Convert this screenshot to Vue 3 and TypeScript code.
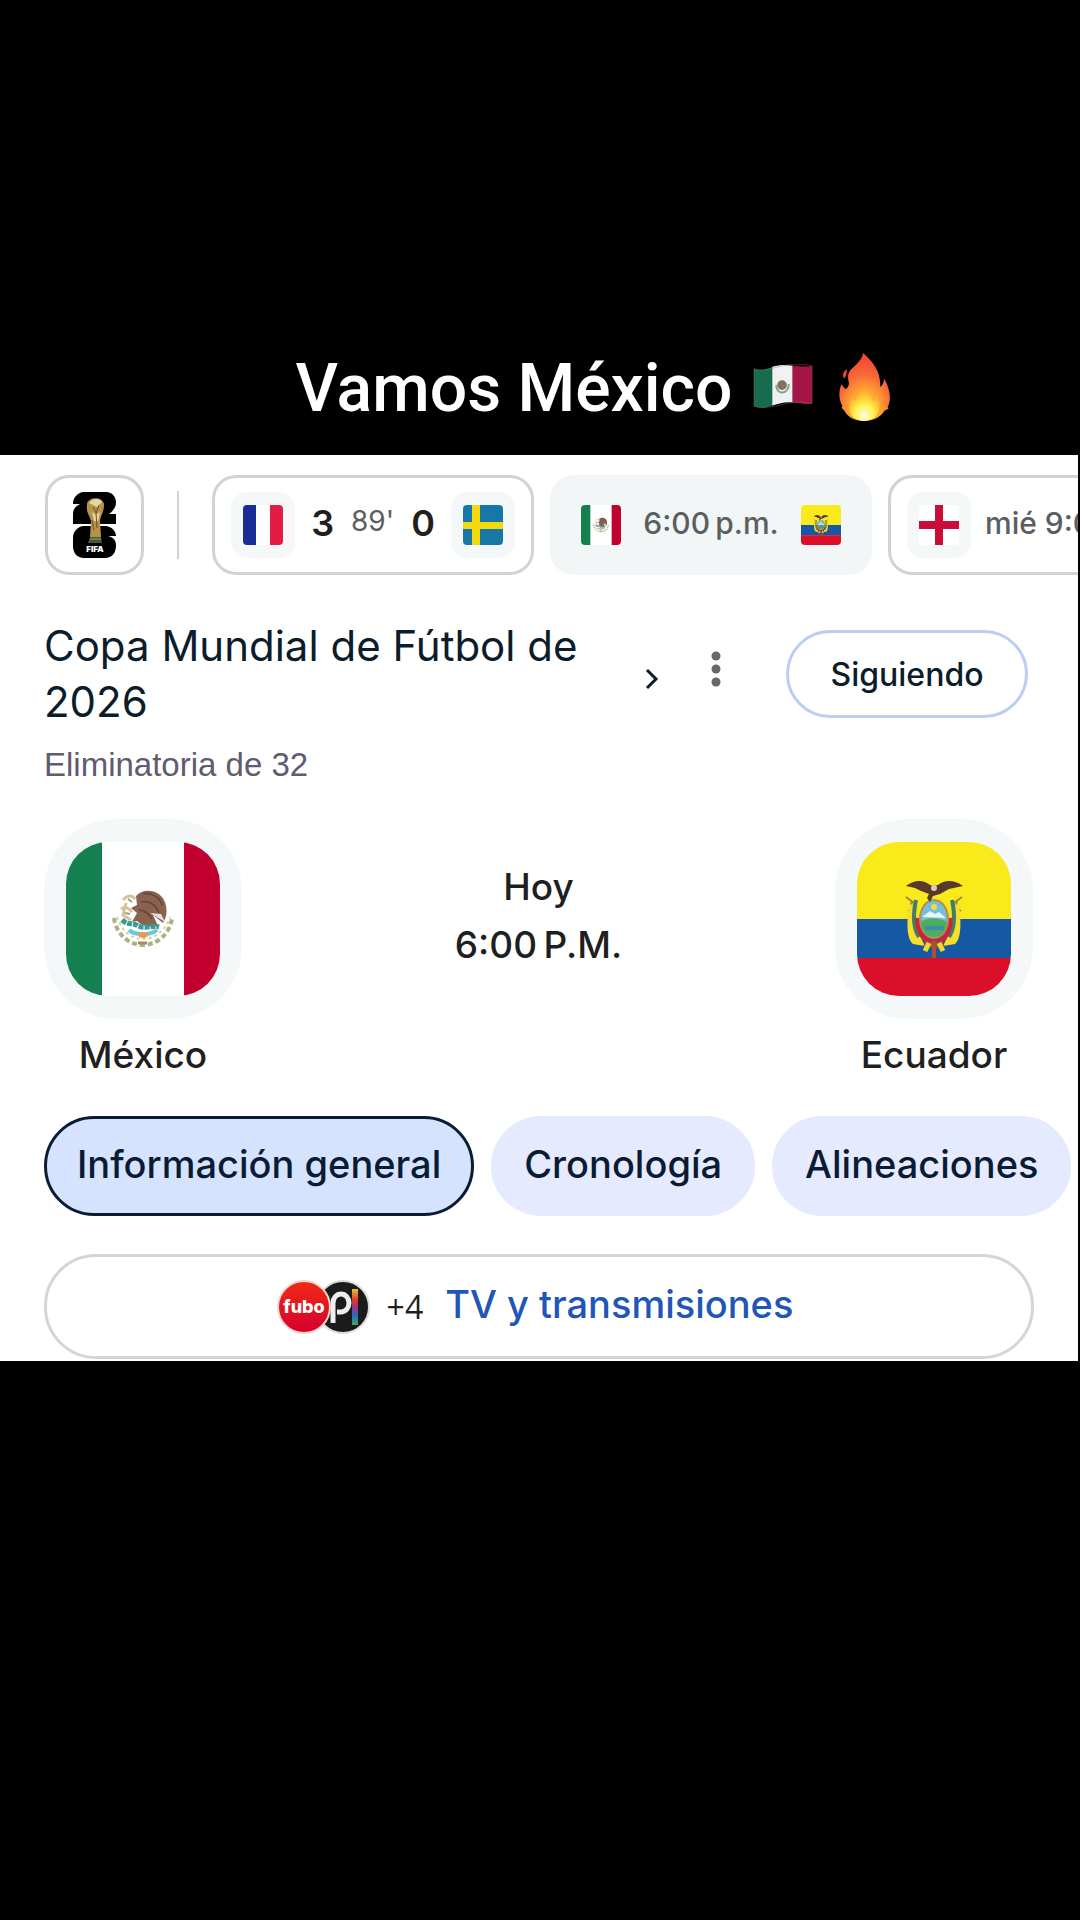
<script setup lang="ts">
import { ref } from 'vue'

interface Team {
  name: string
  flag: string
}

const home: Team = { name: 'México', flag: '#flag-mx' }
const away: Team = { name: 'Ecuador', flag: '#flag-ec' }

const tabs: string[] = ['Información general', 'Cronología', 'Alineaciones']
const activeTab = ref<string>(tabs[0])
</script>

<template>
  <main class="post">
    <svg class="defs" width="0" height="0" aria-hidden="true">
      <symbol id="flag-fr" viewBox="0 0 40 40">
        <rect width="40" height="40" fill="#fff" />
        <rect width="13" height="40" fill="#1b2c96" />
        <rect x="27" width="13" height="40" fill="#e31c41" />
      </symbol>
      <symbol id="flag-se" viewBox="0 0 40 40">
        <rect width="40" height="40" fill="#1778a8" />
        <path d="M9 0h8v40H9zM0 17h40v7H0z" fill="#f5d90f" />
      </symbol>
      <symbol id="flag-en" viewBox="0 0 40 40">
        <rect width="40" height="40" fill="#fff" />
        <path d="M16 0h8v40h-8zM0 16h40v8H0z" fill="#cb0c38" />
      </symbol>
      <symbol id="flag-mx" viewBox="0 0 154 154">
        <rect width="154" height="154" fill="#fff" />
        <rect width="36" height="154" fill="#15804f" />
        <rect x="118" width="36" height="154" fill="#c2002f" />
        <path d="M48 76c2 16 15 27 29 27s27-11 29-27" fill="none" stroke="#a9b287" stroke-width="4" stroke-dasharray="5 3" />
        <path d="M51 75c4 13 14 22 26 22s23-9 27-22" fill="none" stroke="#d8cf9c" stroke-width="2" stroke-dasharray="3 3" />
        <path d="M70 54c7-8 22-7 28 4 4 8 3 17-1 23l-10-8 5 11c-8 2-16 0-21-5l-5 1 5-9-6-5 6-3z" fill="#8a6350" />
        <path d="M77 52c8-2 17 3 19 11M75 60c8-2 15 3 18 11M73 68c6 0 10 4 13 9" fill="none" stroke="#6b493a" stroke-width="2" />
        <path d="M84 71l15 9-4-8z" fill="#e5dfe6" />
        <path d="M57 58c4-5 9-5 12-1M55 67c4-3 8-1 11 3M60 61l-3 12 8 5" fill="none" stroke="#d6c39b" stroke-width="3" />
        <path d="M62 57l4 3M59 71l5 1" stroke="#8fa580" stroke-width="2" />
        <path d="M56 78c7 6 11 2 16 6 8 3 14-1 21 1" fill="none" stroke="#3a9a94" stroke-width="5" stroke-dasharray="5 1" />
        <path d="M63 88c5 5 21 6 28 0" fill="none" stroke="#6cc7d6" stroke-width="4" />
        <ellipse cx="77" cy="93" rx="5" ry="3" fill="#e79a55" />
        <path d="M72 101h9" stroke="#a98b5d" stroke-width="3" />
      </symbol>
      <symbol id="flag-ec" viewBox="0 0 154 154">
        <rect width="154" height="77" fill="#fae91b" />
        <rect y="77" width="154" height="39" fill="#1558a3" />
        <rect y="116" width="154" height="38" fill="#dc0f2b" />
        <path d="M54 58l6 44M100 58l-6 44M49 55l8 6M105 55l-8 6M51 69l6-4M104 69l-6-4" stroke="#a18a43" stroke-width="2" />
        <path d="M52 62c-2 16-3 34 4 40l12 2-5-10-1-30zM102 62c2 16 3 34-4 40l-12 2 5-10 1-30z" fill="#f4df2b" />
        <path d="M59 58c-3 14-3 28 3 37M95 58c3 14 3 28-3 37" fill="none" stroke="#3f7f68" stroke-width="4" />
        <path d="M61 76c-1 13 6 24 16 24s17-11 16-24" fill="none" stroke="#ce233c" stroke-width="5" />
        <ellipse cx="77" cy="77" rx="15" ry="20" fill="#b88e48" />
        <ellipse cx="77" cy="77" rx="13" ry="18" fill="#73bfdc" />
        <path d="M64 80c7-5 18-5 26 0 0 9-6 15-13 15s-13-6-13-15z" fill="#4eae60" />
        <path d="M65 75l8-6 5 3 4-2 7 6z" fill="#e9f5fb" />
        <path d="M67 84h20v4H68z" fill="#398eaa" />
        <circle cx="77" cy="65" r="3" fill="#f3dc3d" />
        <path d="M49 44c8-6 17-7 24-1l4 1 4-1c7-6 17-5 25 1l-14 3-9 5-7 2-3 6-3-4 2-4-8-3-6-3z" fill="#573a27" />
        <circle cx="77" cy="46" r="3" fill="#d8cfbf" />
        <path d="M77 99v17M68 101l19 4M86 101l-19 4" stroke="#a45233" stroke-width="4" />
        <path d="M72 101l-4 8M82 101l4 8" stroke="#f0d92a" stroke-width="5" />
      </symbol>
    </svg>

    <h1 class="caption">
      <span>Vamos México</span>
      <svg class="emoji-flag" viewBox="0 0 62 46" role="img" aria-label="Bandera de México">
        <path d="M1 4c7 3 13 0 20-2v40c-7 2-13 4-20 1z" fill="#166c4c" />
        <path d="M20 2c8-2 13-2 21-1v38c-8-1-13 1-21 3z" fill="#f1f1f2" />
        <path d="M41 1c7 0 13 2 20 0v39c-7 2-13-1-20-1z" fill="#a51446" />
        <path d="M1 4c17 6 26-9 60-3v39c-25-6-37 8-60 3z" fill="none" stroke="#777" stroke-opacity=".4" />
        <circle cx="30" cy="21" r="5" fill="#86715f" />
        <path d="M24 21c0 11 13 10 13-1" fill="none" stroke="#7fa689" stroke-width="2" />
      </svg>
      <svg class="emoji-fire" viewBox="0 0 54 72" role="img" aria-label="Fuego">
        <defs>
          <radialGradient id="fire-outer" cx=".5" cy=".85" r=".85">
            <stop offset="0" stop-color="#ffe23c" />
            <stop offset=".35" stop-color="#ffa62e" />
            <stop offset=".65" stop-color="#f8663b" />
            <stop offset="1" stop-color="#f4402d" />
          </radialGradient>
          <radialGradient id="fire-inner" cx=".5" cy=".85" r=".7">
            <stop offset="0" stop-color="#fffce0" />
            <stop offset=".5" stop-color="#ffee45" />
            <stop offset="1" stop-color="#ffb331" stop-opacity=".4" />
          </radialGradient>
        </defs>
        <path d="M25 0c11 10 19 20 18 36 3-2 4-5 4-9 7 11 8 23 4 30l1 2-4 2c-5 8-13 11-22 11S9 69 5 61l-3-3 1-2C-2 47 0 38 2 33l4 5c2 0 4-3 4-6C7 20 12 18 17 13c5-5 7-8 8-13z" fill="url(#fire-outer)" />
        <path d="M8 17c-1 5 0 6-3 10-3-4 0-8 3-10z" fill="#f4482d" />
        <path d="M26 34c2 7 7 11 10 18 3-3 3-5 3-8 7 12 3 27-12 28-14 0-21-12-14-25l4 5c2-8 9-11 9-18z" fill="url(#fire-inner)" />
      </svg>
    </h1>

    <section class="panel">
      <nav class="matches" aria-label="Partidos">
        <a class="card cup" href="#" aria-label="Copa Mundial">
          <svg width="44" height="66" viewBox="0 0 44 66">
            <path d="M10 0h24c6 1 9 5 9 11 0 4-3 8-7 11h7v10H0V22c0-5 3-8 7-10H0C0 6 4 1 10 0z" fill="#000" />
            <path d="M10 34h23c6 1 10 5 10 10h-8c5 1 8 4 8 9 0 8-4 13-11 13H11C4 66 0 61 0 54v-8c0-6 4-11 10-12z" fill="#000" />
            <path d="M14 12c1-7 15-8 17 0 0 9-3 10-4 17l1 16H17l1-16c-2-7-5-8-4-17z" fill="#b6924c" />
            <path d="M16 11c4-5 10-5 13-1l-5 5zM19 20l4 3 4-3-2 9h-4z" fill="#e7d7a1" />
            <path d="M20 15l3 5M26 13l-3 8 1 15M19 28l2 10" stroke="#6e4f20" stroke-width="1" fill="none" />
            <path d="M17 45h11l1 6H15z" fill="#47553a" />
            <path d="M17 47h11" stroke="#a9a36b" />
            <text x="22" y="60" text-anchor="middle" class="cup-text">FIFA</text>
          </svg>
        </a>
        <span class="divider"></span>
        <a class="card live" href="#">
          <span class="tile"><svg class="flag"><use href="#flag-fr" /></svg></span>
          <span class="result"><b>3</b><span>89'</span><b>0</b></span>
          <span class="tile"><svg class="flag"><use href="#flag-se" /></svg></span>
        </a>
        <a class="card current" href="#">
          <span class="tile"><svg class="flag"><use href="#flag-mx" /></svg></span>
          <span class="time">6:00&#8201;p.m.</span>
          <span class="tile"><svg class="flag"><use href="#flag-ec" /></svg></span>
        </a>
        <a class="card next" href="#">
          <span class="tile"><svg class="flag"><use href="#flag-en" /></svg></span>
          <span class="time">mié 9:00</span>
        </a>
      </nav>

      <header class="heading">
        <a class="league" href="#">
          <h2>Copa Mundial de Fútbol de 2026</h2>
          <svg class="chevron" width="14" height="22" viewBox="0 0 14 22" aria-hidden="true">
            <path d="M2 2l9 9-9 9" fill="none" stroke="#0b1d2b" stroke-width="3" />
          </svg>
        </a>
        <button class="more" type="button" aria-label="Más opciones">
          <svg width="10" height="36" viewBox="0 0 10 36">
            <circle cx="5" cy="5" r="4.5" />
            <circle cx="5" cy="18" r="4.5" />
            <circle cx="5" cy="31" r="4.5" />
          </svg>
        </button>
        <button class="follow" type="button">Siguiendo</button>
      </header>
      <p class="stage">Eliminatoria de 32</p>

      <div class="versus">
        <div class="team">
          <span class="crest"><svg><use :href="home.flag" /></svg></span>
          <span>{{ home.name }}</span>
        </div>
        <p class="kickoff">Hoy<br />6:00&#8201;P.M.</p>
        <div class="team">
          <span class="crest"><svg><use :href="away.flag" /></svg></span>
          <span>{{ away.name }}</span>
        </div>
      </div>

      <div class="tabs">
        <button
          v-for="tab in tabs"
          :key="tab"
          type="button"
          class="tab"
          :class="{ active: tab === activeTab }"
          @click="activeTab = tab"
        >
          {{ tab }}
        </button>
      </div>

      <a class="streams" href="#">
        <svg class="providers" width="94" height="54" viewBox="0 0 94 54" aria-hidden="true">
          <defs>
            <linearGradient id="fubo" x1="0" y1="0" x2="0" y2="1">
              <stop offset="0" stop-color="#ef2b14" />
              <stop offset="1" stop-color="#d6002f" />
            </linearGradient>
            <linearGradient id="rainbow" x1="0" y1="0" x2="0" y2="1">
              <stop offset="0" stop-color="#e9bd38" />
              <stop offset=".3" stop-color="#dc3b28" />
              <stop offset=".5" stop-color="#a52e83" />
              <stop offset=".75" stop-color="#246fc4" />
              <stop offset="1" stop-color="#3bb04a" />
            </linearGradient>
          </defs>
          <circle cx="66" cy="27" r="26" fill="#1b1b1b" stroke="#dedbd8" stroke-width="2" />
          <path d="M56 43V23a8 9 0 1 1 8 9h-4" fill="none" stroke="#eee" stroke-width="5" />
          <rect x="75" y="9" width="6" height="36" fill="url(#rainbow)" />
          <circle cx="27" cy="27" r="26" fill="url(#fubo)" stroke="#f4d9d4" stroke-width="2" />
          <text x="27" y="33" text-anchor="middle" class="fubo-text">fubo</text>
        </svg>
        <span class="extra">+4</span>
        <span class="streams-label">TV y transmisiones</span>
      </a>
    </section>
  </main>
</template>

<style>
body {
  margin: 0;
  background: #000;
}
</style>

<style scoped>
.post {
  min-height: 100vh;
  background: #000;
  overflow: hidden;
  font-family: Inter, Roboto, sans-serif;
  color: #1f1f1f;
}

.defs {
  position: absolute;
}

a {
  color: inherit;
  text-decoration: none;
}

button {
  font-family: inherit;
  cursor: pointer;
}

h1,
h2,
p {
  margin: 0;
}

.caption {
  display: flex;
  justify-content: center;
  align-items: center;
  height: 80px;
  padding: 347px 0 28px 106px;
  font-family: Roboto, sans-serif;
  font-size: 66px;
  font-weight: 500;
  line-height: 80px;
  color: #fff;
}

.caption span {
  padding-top: 4px;
}

.emoji-flag {
  width: 60px;
  height: 46px;
  margin: 0 26px 0 20px;
}

.emoji-fire {
  width: 52px;
  height: 68px;
}

.panel {
  margin-right: 2px;
  padding-bottom: 2px;
  background: #fff;
  overflow: hidden;
}

.matches {
  display: flex;
  align-items: center;
  padding: 20px 0 0 45px;
  white-space: nowrap;
}

.card {
  display: flex;
  flex: none;
  align-items: center;
  justify-content: space-between;
  box-sizing: border-box;
  width: 322px;
  height: 100px;
  padding: 0 16px;
  border: 3px solid #d3d3d3;
  border-radius: 24px;
  font-size: 30px;
  font-weight: 500;
  color: #5b5e61;
}

.cup {
  width: 99px;
  justify-content: center;
}

.cup-text {
  font: 900 8px Inter, sans-serif;
  fill: #fff;
}

.divider {
  flex: none;
  width: 2px;
  height: 68px;
  margin: 0 33px;
  background: #d3d3d3;
}

.tile {
  display: flex;
  align-items: center;
  justify-content: center;
  width: 64px;
  height: 66px;
  border-radius: 16px;
  background: #f5f8f9;
}

.flag {
  width: 40px;
  height: 40px;
  border-radius: 4px;
}

.result {
  display: flex;
  gap: 17px;
  align-items: center;
  padding-bottom: 4px;
}

.result b {
  font-size: 36px;
  font-weight: 600;
  color: #1f1f1f;
}

.result span {
  font-size: 28px;
  font-weight: 400;
  padding-bottom: 4px;
}

.time {
  padding-bottom: 4px;
}

.current {
  margin: 0 16px;
  border-color: #f2f6f7;
  background: #f2f6f7;
}

.current .tile {
  background: none;
}

.next {
  width: 322px;
  justify-content: flex-start;
  gap: 14px;
}

.heading {
  display: flex;
  align-items: center;
  padding: 43px 50px 0 44px;
}

.league {
  display: flex;
  flex: 1;
  align-items: center;
  justify-content: space-between;
  color: #0b1d2b;
}

.league h2 {
  max-width: 560px;
  font-size: 42px;
  font-weight: 400;
  line-height: 56px;
}

.chevron {
  margin-top: 10px;
}

.more {
  margin: 0 65px 10px 52px;
  padding: 0;
  border: 0;
  background: none;
  fill: #66686a;
}

.more svg {
  display: block;
}

.follow {
  box-sizing: border-box;
  width: 242px;
  height: 88px;
  border: 3px solid #b9cdf5;
  border-radius: 44px;
  background: #fff;
  font-size: 32px;
  font-weight: 500;
  color: #0b1d2b;
}

.stage {
  padding: 15px 44px 0;
  font-family: 'Liberation Sans', Arial, sans-serif;
  font-size: 33px;
  line-height: 40px;
  color: #5f5b70;
}

.versus {
  display: flex;
  justify-content: space-between;
  padding: 34px 45px 0 44px;
  font-size: 37px;
  font-weight: 500;
}

.team {
  display: flex;
  flex-direction: column;
  align-items: center;
  gap: 12px;
  line-height: 48px;
}

.crest {
  display: flex;
  align-items: center;
  justify-content: center;
  width: 198px;
  height: 200px;
  border-radius: 72px;
  background: #f5f8f9;
}

.crest svg {
  width: 154px;
  height: 154px;
  border-radius: 42px;
}

.kickoff {
  padding-top: 39px;
  line-height: 58px;
  text-align: center;
}

.tabs {
  display: flex;
  gap: 17px;
  padding: 37px 0 0 44px;
  white-space: nowrap;
}

.tab {
  flex: none;
  height: 100px;
  padding: 0 30px 4px;
  border: 3px solid #e5eaff;
  border-radius: 50px;
  background: #e5eaff;
  font-size: 38px;
  font-weight: 500;
  color: #0a1c33;
}

.tab.active {
  border-color: #0a1c33;
  background: #d6e3ff;
}

.streams {
  display: flex;
  align-items: center;
  justify-content: center;
  box-sizing: border-box;
  height: 105px;
  margin: 38px 44px 0;
  padding-right: 8px;
  border: 3px solid #d5d5d5;
  border-radius: 52px;
}

.fubo-text {
  font: 800 18px Inter, sans-serif;
  fill: #fff;
}

.extra {
  margin: 0 22px 0 16px;
  font-family: 'Open Sans', sans-serif;
  font-size: 32px;
}

.streams-label {
  padding-bottom: 6px;
  font-size: 38px;
  font-weight: 500;
  color: #1f56b8;
}
</style>
